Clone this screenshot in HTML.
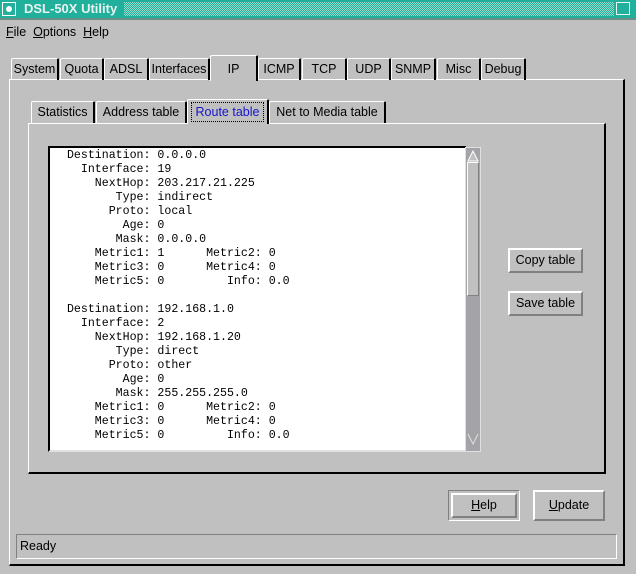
<!DOCTYPE html>
<html><head><style>
*{margin:0;padding:0;box-sizing:border-box}
body{width:636px;height:574px;background:#c0c0c0;position:relative;overflow:hidden;font-family:"Liberation Sans",sans-serif;font-size:12px;color:#000}
.a{position:absolute}
.raised{border-top:1px solid #fff;border-left:1px solid #fff;border-right:1px solid #000;border-bottom:1px solid #000}
.sunk{border-top:1px solid #808080;border-left:1px solid #808080;border-right:1px solid #fff;border-bottom:1px solid #fff}
.tab{position:absolute;border-top:1px solid #fff;border-left:1px solid #fff;border-right:2px solid #000;text-align:center;line-height:20px;font-size:12.5px;border-radius:2px 2px 0 0}
.btn{position:absolute;border-top:2px solid #fff;border-left:2px solid #fff;border-right:2px solid #808080;border-bottom:2px solid #808080;text-align:center;font-size:12.5px}
pre{font-family:"Liberation Mono",monospace;font-size:11.6px;line-height:14px}
u{text-decoration:underline}
</style></head><body>
<div class="a" style="left:0;top:0;width:636px;height:18px;background:#20b09c"></div>
<div class="a" style="left:124px;top:2px;width:490px;height:14px;background-image:repeating-conic-gradient(#20b09c 0 25%,#9ad8cc 0 50%);background-size:2px 2px"></div>
<div class="a" style="left:2px;top:2px;width:14px;height:14px;border:1px solid #fff"></div>
<div class="a" style="left:6px;top:6px;width:6px;height:6px;border-radius:50%;background:#fff"></div>
<div class="a" style="left:24px;top:1px;color:#e8f4f0;font-weight:bold;font-size:13px">DSL-50X Utility</div>
<div class="a" style="left:616px;top:2px;width:14px;height:13px;border:1px solid #e8f4f0"></div>
<div class="a" style="left:0;top:18px;width:636px;height:2px;background:#6c8c88"></div>
<div class="a" style="left:6px;top:25px;font-size:12.5px"><u>F</u>ile&nbsp; <u>O</u>ptions&nbsp; <u>H</u>elp</div>

<div class="a" style="left:9px;top:79px;width:616px;height:487px;border-top:1px solid #fff;border-left:1px solid #fff;border-right:2px solid #000;border-bottom:2px solid #000"></div>
<div class="tab" style="left:11px;top:58px;width:48px;height:22px">System</div>
<div class="tab" style="left:60px;top:58px;width:44px;height:22px">Quota</div>
<div class="tab" style="left:104px;top:58px;width:45px;height:22px">ADSL</div>
<div class="tab" style="left:149px;top:58px;width:61px;height:22px">Interfaces</div>
<div class="tab" style="left:210px;top:55px;width:48px;height:26px;background:#c0c0c0;line-height:26px">IP</div>
<div class="tab" style="left:258px;top:58px;width:43px;height:22px">ICMP</div>
<div class="tab" style="left:302px;top:58px;width:45px;height:22px">TCP</div>
<div class="tab" style="left:347px;top:58px;width:44px;height:22px">UDP</div>
<div class="tab" style="left:391px;top:58px;width:45px;height:22px">SNMP</div>
<div class="tab" style="left:437px;top:58px;width:44px;height:22px">Misc</div>
<div class="tab" style="left:481px;top:58px;width:45px;height:22px">Debug</div>

<div class="a" style="left:28px;top:123px;width:578px;height:351px;border-top:1px solid #fff;border-left:1px solid #fff;border-right:2px solid #000;border-bottom:2px solid #000"></div>
<div class="tab" style="left:31px;top:101px;width:64px;height:22px">Statistics</div>
<div class="tab" style="left:96px;top:101px;width:91px;height:22px">Address table</div>
<div class="tab" style="left:187px;top:99px;width:82px;height:25px;background:#c0c0c0;color:#1414d0"><span style="display:inline-block;border:1px dotted #000;padding:0 4px;line-height:18px;margin-top:2px">Route table</span></div>
<div class="tab" style="left:269px;top:101px;width:117px;height:22px">Net to Media table</div>

<div class="a" style="left:48px;top:146px;width:418px;height:306px;background:#fff;border-top:2px solid #000;border-left:2px solid #000;border-bottom:2px solid #e0e0e0"></div>
<pre class="a" style="left:60px;top:149px"> Destination: 0.0.0.0
   Interface: 19
     NextHop: 203.217.21.225
        Type: indirect
       Proto: local
         Age: 0
        Mask: 0.0.0.0
     Metric1: 1      Metric2: 0
     Metric3: 0      Metric4: 0
     Metric5: 0         Info: 0.0

 Destination: 192.168.1.0
   Interface: 2
     NextHop: 192.168.1.20
        Type: direct
       Proto: other
         Age: 0
        Mask: 255.255.255.0
     Metric1: 0      Metric2: 0
     Metric3: 0      Metric4: 0
     Metric5: 0         Info: 0.0</pre>
<div class="a" style="left:465px;top:147px;width:16px;height:305px;background:#a4a4a8;border:1px solid #e0e0e0"></div>
<div class="a raised" style="left:467px;top:162px;width:12px;height:134px;background:#c0c0c0;border-right-color:#808080;border-bottom-color:#808080"></div>
<svg class="a" style="left:466px;top:148px" width="14" height="300"><path d="M2 13 L7 3 L12 13 Z" fill="#c0c0c0" stroke="#fff"/><path d="M2 286 L7 296 L12 286" fill="none" stroke="#e0e0e0"/></svg>

<div class="btn" style="left:508px;top:248px;width:75px;height:25px;line-height:20px">Copy table</div>
<div class="btn" style="left:508px;top:291px;width:75px;height:25px;line-height:20px">Save table</div>

<div class="a" style="left:448px;top:490px;width:72px;height:31px;border:1px solid #808080;border-right-color:#fff;border-bottom-color:#fff"></div>
<div class="btn" style="left:451px;top:493px;width:66px;height:25px;line-height:21px"><u>H</u>elp</div>
<div class="btn" style="left:533px;top:490px;width:72px;height:31px;line-height:27px"><u>U</u>pdate</div>

<div class="a sunk" style="left:16px;top:534px;width:601px;height:25px"></div>
<div class="a" style="left:20px;top:539px;font-size:12.5px">Ready</div>
</body></html>
